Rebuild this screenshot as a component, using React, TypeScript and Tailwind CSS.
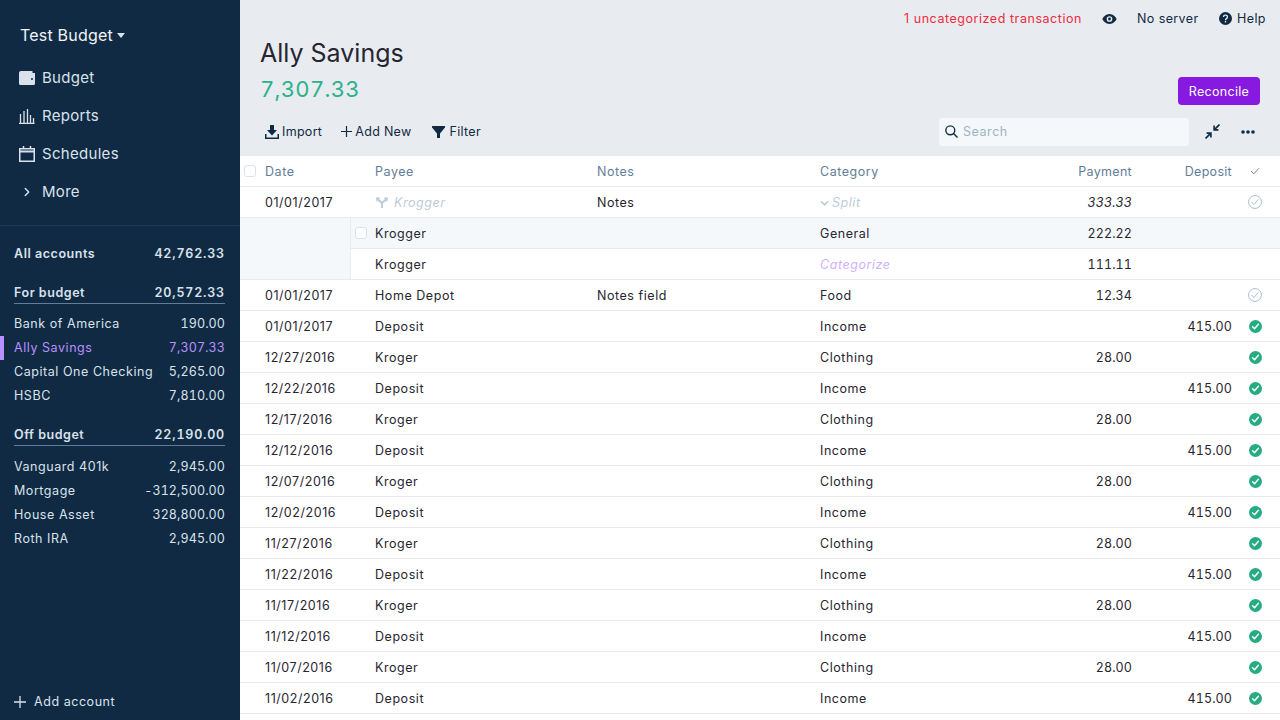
import { ChevronRight } from 'lucide-react';

type Tx = { date: string; payee: string; notes?: string; category: string; payment?: string; deposit?: string };

const sections = [
  {
    name: 'For budget',
    total: '20,572.33',
    accounts: [
      ['Bank of America', '190.00'],
      ['Ally Savings', '7,307.33'],
      ['Capital One Checking', '5,265.00'],
      ['HSBC', '7,810.00'],
    ],
  },
  {
    name: 'Off budget',
    total: '22,190.00',
    accounts: [
      ['Vanguard 401k', '2,945.00'],
      ['Mortgage', '-312,500.00'],
      ['House Asset', '328,800.00'],
      ['Roth IRA', '2,945.00'],
    ],
  },
];

const rows: Tx[] = [
  { date: '01/01/2017', payee: 'Deposit', category: 'Income', deposit: '415.00' },
  { date: '12/27/2016', payee: 'Kroger', category: 'Clothing', payment: '28.00' },
  { date: '12/22/2016', payee: 'Deposit', category: 'Income', deposit: '415.00' },
  { date: '12/17/2016', payee: 'Kroger', category: 'Clothing', payment: '28.00' },
  { date: '12/12/2016', payee: 'Deposit', category: 'Income', deposit: '415.00' },
  { date: '12/07/2016', payee: 'Kroger', category: 'Clothing', payment: '28.00' },
  { date: '12/02/2016', payee: 'Deposit', category: 'Income', deposit: '415.00' },
  { date: '11/27/2016', payee: 'Kroger', category: 'Clothing', payment: '28.00' },
  { date: '11/22/2016', payee: 'Deposit', category: 'Income', deposit: '415.00' },
  { date: '11/17/2016', payee: 'Kroger', category: 'Clothing', payment: '28.00' },
  { date: '11/12/2016', payee: 'Deposit', category: 'Income', deposit: '415.00' },
  { date: '11/07/2016', payee: 'Kroger', category: 'Clothing', payment: '28.00' },
  { date: '11/02/2016', payee: 'Deposit', category: 'Income', deposit: '415.00' },
];

function PlusIcon({ size, color }: { size: string; color: string }) {
  return (
    <svg viewBox="0 0 12 12" className={size} fill="none" stroke={color} strokeWidth="1.300">
      <path d="M6 0v12M0 6h12" />
    </svg>
  );
}

function Checkbox() {
  return <div className="-mt-[2px] h-3 w-3 rounded-[3px] border border-[#d9e2ec] bg-white" />;
}

function ClearedIcon() {
  return (
    <svg viewBox="0 0 20 20" className="h-[13px] w-[13px]">
      <circle cx="10" cy="10" r="10" fill="#27ab83" />
      <path d="M5.500 10.500l3 3 6-7" fill="none" stroke="#fff" strokeWidth="2.200" strokeLinecap="round" strokeLinejoin="round" />
    </svg>
  );
}

function UnclearedIcon() {
  return (
    <svg viewBox="0 0 20 20" className="h-[14px] w-[14px]">
      <circle cx="10" cy="10" r="9.200" fill="none" stroke="#a9bbcf" strokeWidth="1.400" />
      <path d="M5.500 10.500l3 3 6-7" fill="none" stroke="#a9bbcf" strokeWidth="1.400" strokeLinecap="round" strokeLinejoin="round" />
    </svg>
  );
}

function Row({ date, payee, notes, category, payment, deposit, cleared = true }: Tx & { cleared?: boolean }) {
  return (
    <div className="flex h-[31px] shrink-0 items-center border-b border-[#e8ecf0] bg-white pt-[2px] text-[#272630]">
      <div className="w-5" />
      <div className="w-[110px] pl-[5px]">{date}</div>
      <div className="w-[222px] pl-[5px]">{payee}</div>
      <div className="w-[223px] pl-[5px]">{notes}</div>
      <div className="w-[222px] pl-[5px]">{category}</div>
      <div className="w-[100px] pr-[5px] text-right tabular-nums tracking-[0.1px]">{payment}</div>
      <div className="w-[100px] pr-[5px] text-right tabular-nums tracking-[0.1px]">{deposit}</div>
      <div className="-mt-[2px] flex w-[36px] justify-center">{cleared ? <ClearedIcon /> : <UnclearedIcon />}</div>
    </div>
  );
}

function SplitChild({ payee, category, payment, first }: { payee: string; category: string; payment: string; first?: boolean }) {
  return (
    <div className={`flex h-[31px] items-center border-b border-[#e8ecf0] pt-[2px] text-[#272630] ${first ? 'bg-[#f5f8fa]' : 'bg-white'}`}>
      <div className="flex w-5 justify-center">{first && <Checkbox />}</div>
      <div className="-ml-[1px] w-[222px] pl-[5px]">{payee}</div>
      <div className="w-[223px]" />
      <div className={`w-[222px] pl-[5px] ${first ? '' : 'italic text-[#cfb0ff]'}`}>{category}</div>
      <div className="w-[100px] pr-[5px] text-right tabular-nums tracking-[0.1px]">{payment}</div>
    </div>
  );
}

export default function App() {
  return (
    <div className="flex h-screen w-full overflow-hidden text-[12.5px] tracking-[0.55px] font-['Inter',sans-serif]">
      {/* Sidebar */}
      <aside className="flex w-[240px] shrink-0 flex-col bg-[#102a43] text-[#d9e2ec]">
        <div className="flex h-[59px] shrink-0 items-center gap-[4px] pt-[11px] pl-5 text-[16px] tracking-[0.2px] text-[#f0f4f8]">
          Test Budget
          <svg viewBox="0 0 10 6" className="mt-[1px] h-[5px] w-[8px]"><path d="M0 0h10L5 6z" fill="#d9e2ec" /></svg>
        </div>
        <nav className="flex flex-col text-[15px] tracking-[0.3px]">
          <NavItem label="Budget" icon={<svg viewBox="0 0 16 14" className="h-[14px] w-[16px]"><path d="M2 0h11.500v2H16v10.500a1.500 1.500 0 0 1-1.500 1.500H1.500A1.500 1.500 0 0 1 0 12.500V2a2 2 0 0 1 2-2zm11 7a1 1 0 1 0 0 2 1 1 0 0 0 0-2z" fill="#d9e2ec" fillRule="evenodd" /></svg>} />
          <NavItem label="Reports" icon={<svg viewBox="0 0 16 15" className="h-[15px] w-[16px]" fill="none" stroke="#d9e2ec" strokeWidth="1.300"><path d="M0 14.400h15.500M1.500 5v9M5 2v12M8.500 0v14M11.500 6v8M14.500 9v5" /></svg>} />
          <NavItem label="Schedules" icon={<svg viewBox="0 0 16 16" className="h-4 w-4" fill="none" stroke="#d9e2ec"><rect x="0.750" y="2.750" width="14.500" height="12.500" strokeWidth="1.500" /><path d="M0.750 5.500h14.500" strokeWidth="2" /><path d="M4.500 0v3M11.500 0v3" strokeWidth="1.500" /></svg>} />
          <NavItem label="More" icon={<ChevronRight className="h-[14px] w-[14px]" strokeWidth={2.500} />} />
        </nav>
        <div className="mt-[14px] flex flex-1 flex-col border-t border-[#1e3a55] pt-4">
          <div className="flex h-6 items-center justify-between pl-[14px] pr-[15px] font-semibold">
            <span>All accounts</span>
            <span className="tabular-nums tracking-[0.8px]">42,762.33</span>
          </div>
          {sections.map((s) => (
            <div key={s.name} className="mt-[15px]">
              <div className={`mr-[15px] ml-[14px] flex h-[23px] items-center justify-between border-b border-[#627d98] pt-[3px] font-semibold ${s.name === 'Off budget' ? 'mb-[9px]' : 'mb-2'}`}>
                <span>{s.name}</span>
                <span className="tabular-nums tracking-[0.8px]">{s.total}</span>
              </div>
              {s.accounts.map(([name, value]) => {
                const active = name === 'Ally Savings';
                return (
                  <div key={name} className={`flex h-6 items-center justify-between pr-[15px] ${active ? 'border-l-4 border-[#b990ff] pl-[10px] text-[#b990ff]' : 'pl-[14px]'}`}>
                    <span>{name}</span>
                    <span className="tabular-nums tracking-[0.1px]">{value}</span>
                  </div>
                );
              })}
            </div>
          ))}
          <div className="mt-auto flex h-[37px] items-center gap-2 pl-[14px]">
            <PlusIcon size="h-3 w-3" color="#d9e2ec" />
            <span className="pt-[2px]">Add account</span>
          </div>
        </div>
      </aside>

      {/* Main */}
      <main className="flex min-w-0 flex-1 flex-col bg-[#e8ecf0]">
        <div className="flex h-[37px] shrink-0 items-center justify-end pr-[15px] text-[#102a43]">
          <span className="pt-[2px] text-[#ef2b3f]">1 uncategorized transaction</span>
          <svg viewBox="0 0 20 14" className="ml-5 h-[10px] w-[15px]"><path d="M10 0c5 0 8.600 4 10 7-1.400 3-5 7-10 7S1.400 10 0 7c1.400-3 5-7 10-7zm0 3a4 4 0 1 0 0 8 4 4 0 0 0 0-8zm0 2a2 2 0 1 1 0 4 2 2 0 0 1 0-4z" fill="#102a43" fillRule="evenodd" /></svg>
          <span className="ml-5 w-[61px] whitespace-nowrap pt-[2px] tracking-[0.4px]">No server</span>
          <svg viewBox="0 0 20 20" className="ml-[21px] h-[13px] w-[13px]"><path d="M10 0a10 10 0 1 1 0 20 10 10 0 0 1 0-20zM9 12.500h2c0-1.600 3-2.200 3-5C14 5.300 12.200 4 10 4S6 5.300 6 7.500h2c0-1 .9-1.600 2-1.600s2 .6 2 1.600c0 1.600-3 2-3 5zM9 14v2h2v-2z" fill="#102a43" fillRule="evenodd" /></svg>
          <span className="ml-[5px] w-[28px] pt-[2px] tracking-[0.4px]">Help</span>
        </div>

        <div className="flex h-[33px] shrink-0 items-center pl-5 text-[25px] tracking-normal text-[#272630]">Ally Savings</div>
        <div className="flex h-[39px] shrink-0 items-center justify-between pl-5 pr-5">
          <span className="text-[22px] tabular-nums tracking-[0.3px] text-[#2cb18c]">7,307.33</span>
          <button className="mt-[3px] h-7 w-[82px] rounded-[4px] bg-[#8719e0] pt-[2px] tracking-[0.3px] text-white">Reconcile</button>
        </div>

        <div className="flex h-[47px] shrink-0 items-center pb-[2px] pl-[25px] pr-[25px] tracking-[0.3px] text-[#102a43]">
          <div className="flex items-center gap-[3px]">
            <svg viewBox="0 0 14 14" className="h-[14px] w-[14px]"><path d="M5 0h4v5h3L7 10.500 2 5h3zM0 9h1.500v3.500h11V9H14v5H0z" fill="#102a43" /></svg>
            <span className="pt-[2px]">Import</span>
          </div>
          <div className="ml-[19px] flex items-center gap-[3px]">
            <PlusIcon size="h-[11px] w-[11px]" color="#102a43" />
            <span className="pt-[2px]">Add New</span>
          </div>
          <div className="ml-5 flex items-center gap-[5px]">
            <svg viewBox="0 0 13 12" className="h-3 w-[13px]"><path d="M0 0h13v1.500L8 7.500V12H5V7.500L0 1.500z" fill="#102a43" /></svg>
            <span className="pt-[2px]">Filter</span>
          </div>
          <div className="ml-auto flex h-7 w-[250px] items-center gap-[5px] rounded-[4px] bg-[#f5f8fa] pl-[6px] tracking-[0.55px] text-[#9fb3c8]">
            <svg viewBox="0 0 14 14" className="h-[13px] w-[13px]" fill="none" stroke="#102a43" strokeWidth="1.500"><circle cx="5.700" cy="5.700" r="4.800" /><path d="M9.200 9.200L13.500 13.500" /></svg>
            <span className="pt-[2px]">Search</span>
          </div>
          <svg viewBox="0 0 14 14" className="ml-4 h-[15px] w-[15px]" fill="none" stroke="#102a43" strokeWidth="1.500"><path d="M13.500 0.500L8.500 5.500M8.500 1.500v4h4M0.500 13.500l5-5M5.500 12.500v-4h-4" /></svg>
          <svg viewBox="0 0 14 4" className="ml-[21px] h-1 w-[14px]"><circle cx="2" cy="2" r="1.800" fill="#102a43" /><circle cx="7" cy="2" r="1.800" fill="#102a43" /><circle cx="12" cy="2" r="1.800" fill="#102a43" /></svg>
        </div>

        {/* Table */}
        <div className="min-h-0 flex-1 overflow-hidden bg-white">
          <div className="flex h-[31px] items-center border-b border-[#e8ecf0] pt-[2px] text-[#627d98]">
            <div className="flex w-5 justify-center"><Checkbox /></div>
            <div className="w-[110px] pl-[5px]">Date</div>
            <div className="w-[222px] pl-[5px]">Payee</div>
            <div className="w-[223px] pl-[5px]">Notes</div>
            <div className="w-[222px] pl-[5px]">Category</div>
            <div className="w-[100px] pr-[5px] text-right tracking-[0.3px]">Payment</div>
            <div className="w-[100px] pr-[5px] text-right tracking-[0.3px]">Deposit</div>
            <div className="-mt-[2px] flex w-[36px] justify-center">
              <svg viewBox="0 0 12 10" className="h-2 w-[10px]" fill="none" stroke="#627d98" strokeWidth="1.200"><path d="M1 5l3.500 3.500L11 1.500" /></svg>
            </div>
          </div>

          {/* Split parent */}
          <div className="flex h-[31px] items-center border-b border-[#e8ecf0] pt-[2px] text-[#272630]">
            <div className="w-5" />
            <div className="w-[110px] pl-[5px]">01/01/2017</div>
            <div className="flex w-[222px] items-center gap-[5px] pl-[5px] italic text-[#bcccdc]">
              <svg viewBox="0 0 14 12" className="-mt-[2px] h-[12px] w-[14px]" fill="#bcccdc" stroke="none">
                <path d="M6 12V7.500L2.800 4.700 1.800 6 0.800 1.500 5.300 1.600 4.200 3.200 7 5.600 9.800 3.200 8.700 1.600 13.200 1.500 12.200 6 11.200 4.700 8 7.500V12z" />
              </svg>
              Krogger
            </div>
            <div className="w-[223px] pl-[5px]">Notes</div>
            <div className="flex w-[222px] items-center gap-[3px] pl-[5px] italic text-[#bcccdc]">
              <svg viewBox="0 0 10 6" className="h-[6px] w-[9px]" fill="none" stroke="#bcccdc" strokeWidth="1.800"><path d="M1 1l4 4 4-4" /></svg>
              Split
            </div>
            <div className="w-[100px] pr-[5px] text-right italic tabular-nums tracking-[0.1px]">333.33</div>
            <div className="w-[100px]" />
            <div className="-mt-[2px] flex w-[36px] justify-center"><UnclearedIcon /></div>
          </div>

          {/* Split children */}
          <div className="flex h-[62px]">
            <div className="w-[111px] shrink-0 border-r border-b border-[#e8ecf0] bg-[#f5f8fa]" />
            <div className="flex-1">
              <SplitChild first payee="Krogger" category="General" payment="222.22" />
              <SplitChild payee="Krogger" category="Categorize" payment="111.11" />
            </div>
          </div>

          <Row date="01/01/2017" payee="Home Depot" notes="Notes field" category="Food" payment="12.34" cleared={false} />
          {rows.map((r) => (
            <Row key={r.date} {...r} />
          ))}
        </div>
      </main>
    </div>
  );
}

function NavItem({ label, icon }: { label: string; icon: React.ReactNode }) {
  return (
    <div className="flex h-[38px] items-center gap-[7px] pl-[19px]">
      <div className="flex w-4 justify-center">{icon}</div>
      {label}
    </div>
  );
}
